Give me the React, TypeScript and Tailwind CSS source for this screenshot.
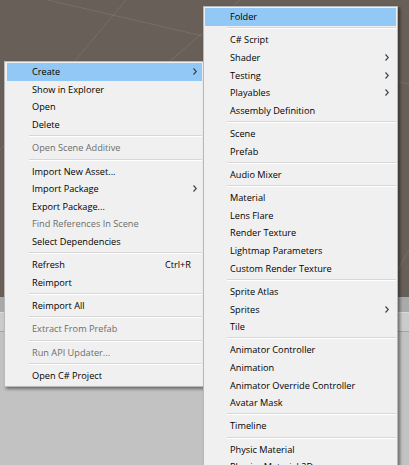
import React from "react";

type Item =
  | { sep: true }
  | { sep?: false; t: string; hl?: boolean; arrow?: boolean; dis?: boolean; sc?: string };

const S: Item = { sep: true };

const leftItems: Item[] = [
  { t: "Create", hl: true, arrow: true },
  { t: "Show in Explorer" },
  { t: "Open" },
  { t: "Delete" },
  S,
  { t: "Open Scene Additive", dis: true },
  S,
  { t: "Import New Asset..." },
  { t: "Import Package", arrow: true },
  { t: "Export Package..." },
  { t: "Find References In Scene", dis: true },
  { t: "Select Dependencies" },
  S,
  { t: "Refresh", sc: "Ctrl+R" },
  { t: "Reimport" },
  S,
  { t: "Reimport All" },
  S,
  { t: "Extract From Prefab", dis: true },
  S,
  { t: "Run API Updater...", dis: true },
  S,
  { t: "Open C# Project" },
];

const rightItems: Item[] = [
  { t: "Folder", hl: true },
  S,
  { t: "C# Script" },
  { t: "Shader", arrow: true },
  { t: "Testing", arrow: true },
  { t: "Playables", arrow: true },
  { t: "Assembly Definition" },
  S,
  { t: "Scene" },
  { t: "Prefab" },
  S,
  { t: "Audio Mixer" },
  S,
  { t: "Material" },
  { t: "Lens Flare" },
  { t: "Render Texture" },
  { t: "Lightmap Parameters" },
  { t: "Custom Render Texture" },
  S,
  { t: "Sprite Atlas" },
  { t: "Sprites", arrow: true },
  { t: "Tile" },
  S,
  { t: "Animator Controller" },
  { t: "Animation" },
  { t: "Animator Override Controller" },
  { t: "Avatar Mask" },
  S,
  { t: "Timeline" },
  S,
  { t: "Physic Material" },
  { t: "Physics Material 2D" },
  { t: "GUI Skin" },
  { t: "Custom Font" },
];

function Chevron() {
  return (
    <svg width="4" height="7" viewBox="0 0 4 7" className="block">
      <polyline points="0.5,0.5 3.3,3.5 0.5,6.5" fill="none" stroke="#3a3a3a" strokeWidth="1.1" />
    </svg>
  );
}

function Menu({ items, right }: { items: Item[]; right?: boolean }) {
  return (
    <div className="flex flex-col">
      {items.map((it, i) =>
        it.sep ? (
          <div key={i} className="h-[5.7px] flex flex-col justify-center pl-[22px]">
            <div className="h-px bg-[#d7d7d7]" />
            <div className="h-px bg-white" />
          </div>
        ) : (
          <div
            key={i}
            className={
              "h-[17.6px] flex items-center pl-[25px] " +
              (right ? "pr-[7px] " : "pr-[5px] ") +
              (it.hl ? "bg-[#92c8f5] " : "") +
              (it.dis ? "text-[#6d6d6d]" : "text-black")
            }
          >
            <span className="flex-1 whitespace-nowrap leading-none">{it.t}</span>
            {it.sc && <span className="mr-[6px] leading-none">{it.sc}</span>}
            {it.arrow && <Chevron />}
          </div>
        )
      )}
    </div>
  );
}

export default function App() {
  return (
    <div
      className="relative w-[409px] h-[465px] overflow-hidden flex flex-col text-[9.2px]"
      style={{ fontFamily: '"Open Sans", "Noto Sans", sans-serif' }}
    >
      <div className="h-[297px] bg-[#675f58] relative">
        <svg width="409" height="297" className="absolute inset-0">
          <g stroke="rgba(255,255,255,0.10)" strokeWidth="1" fill="none">
            <line x1="48" y1="0" x2="409" y2="84" />
            <line x1="126" y1="0" x2="0" y2="150" />
            <line x1="240" y1="0" x2="160" y2="70" />
            <line x1="409" y1="250" x2="395" y2="275" />
          </g>
        </svg>
      </div>
      <div className="h-[15px] bg-[#aaaaaa]" />
      <div className="h-px bg-[#dadada]" />
      <div className="h-[18px] bg-[#cbcbcb]" />
      <div className="h-px bg-[#a3a3a3]" />
      <div className="flex-1 bg-[#c2c2c2]" />

      <div className="absolute left-[4px] top-[61px] w-[201px] bg-[#f0f0f0] border border-[#b9b9b9] px-[2px] pt-[1px] pb-[2px] shadow-[2px_2px_3px_rgba(0,0,0,0.45)]">
        <Menu items={leftItems} />
      </div>

      <div className="absolute left-[203px] top-[6px] w-[195px] bg-[#f0f0f0] border border-[#b9b9b9] px-[1px] pt-[1px] pb-[2px] shadow-[2px_2px_3px_rgba(0,0,0,0.45)]">
        <Menu items={rightItems} right />
      </div>
    </div>
  );
}
